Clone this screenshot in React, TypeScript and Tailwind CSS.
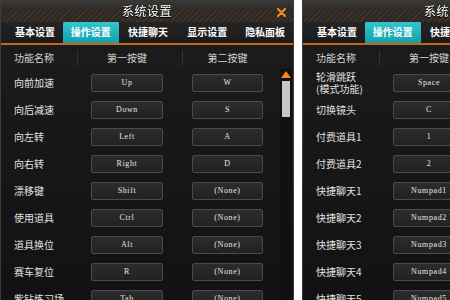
import React from 'react'

type Row = { name: string; sub?: string; k1: string; k2: string }

const leftRows: Row[] = [
  { name: '向前加速', k1: 'Up', k2: 'W' },
  { name: '向后减速', k1: 'Down', k2: 'S' },
  { name: '向左转', k1: 'Left', k2: 'A' },
  { name: '向右转', k1: 'Right', k2: 'D' },
  { name: '漂移键', k1: 'Shift', k2: '(None)' },
  { name: '使用道具', k1: 'Ctrl', k2: '(None)' },
  { name: '道具换位', k1: 'Alt', k2: '(None)' },
  { name: '赛车复位', k1: 'R', k2: '(None)' },
  { name: '紫钻练习场', k1: 'Tab', k2: '(None)' },
]

const rightRows: Row[] = [
  { name: '轮滑跳跃', sub: '(模式功能)', k1: 'Space', k2: '(None)' },
  { name: '切换镜头', k1: 'C', k2: '(None)' },
  { name: '付费道具1', k1: '1', k2: '(None)' },
  { name: '付费道具2', k1: '2', k2: '(None)' },
  { name: '快捷聊天1', k1: 'Numpad1', k2: '(None)' },
  { name: '快捷聊天2', k1: 'Numpad2', k2: '(None)' },
  { name: '快捷聊天3', k1: 'Numpad3', k2: '(None)' },
  { name: '快捷聊天4', k1: 'Numpad4', k2: '(None)' },
  { name: '快捷聊天5', k1: 'Numpad5', k2: '(None)' },
]

const tabs = [
  { label: '基本设置', w: 'w-[56px]' },
  { label: '操作设置', w: 'w-[56px]' },
  { label: '快捷聊天', w: 'w-[59px]' },
  { label: '显示设置', w: 'w-[60px]' },
  { label: '隐私面板', w: 'w-[56px]' },
]

const cjk = "font-['Noto_Sans_CJK_SC','Noto_Sans',sans-serif]"

function KeyBox({ text, w }: { text: string; w: string }) {
  return (
    <div
      className={`${w} h-[18px] flex items-center justify-center rounded-[2px] border border-[#4a4a4a] bg-gradient-to-b from-[#2c2c2c] to-[#222222] text-[#e6e6e6] text-[8px] tracking-[0.6px] font-['Liberation_Serif',serif]`}
    >
      {text}
    </div>
  )
}

function Panel({ rows }: { rows: Row[] }) {
  return (
    <div className={`w-[294px] h-[300px] shrink-0 flex flex-col bg-[#161616] border-x border-[#3c3c3c] ${cjk}`}>
      {/* Title bar */}
      <div className="relative h-[22px] shrink-0 bg-[repeating-linear-gradient(135deg,#2c2a28_0px,#2c2a28_3px,#4a3620_3px,#4a3620_4px)] flex items-center justify-center">
        <div className="absolute inset-x-0 top-0 h-[10px] bg-gradient-to-b from-[#3a3a3a] to-[#2d2b29]" />
        <span className="relative text-white text-[12px] leading-none tracking-[0.5px] drop-shadow-[0_1px_0_#000]">系统设置</span>
        <svg className="absolute right-[7px] top-[8px]" width="9" height="9" viewBox="0 0 9 9">
          <path d="M1 1 L8 8 M8 1 L1 8" stroke="#f08a1c" strokeWidth="2.2" strokeLinecap="round" />
        </svg>
      </div>

      {/* Tabs */}
      <div className="h-[23px] shrink-0 flex items-end pl-[6px] gap-0 bg-gradient-to-b from-[#242424] to-[#1b1b1b] border-b-2 border-[#c4661c]">
        {tabs.map((t, i) => (
          <div
            key={t.label}
            className={`${t.w} h-[22px] flex items-center justify-center text-[10px] font-bold leading-none text-white ${
              i === 1 ? 'rounded-t-[3px] bg-gradient-to-b from-[#37c6cf] to-[#12a0ab]' : ''
            }`}
          >
            {t.label}
          </div>
        ))}
      </div>

      {/* Header */}
      <div className="h-[24px] shrink-0 flex items-center text-[10px] text-[#d4d4d4] bg-[#1b1b1b]">
        <div className="w-[77px] pl-[13px] border-r border-[#333]">功能名称</div>
        <div className="w-[105px] text-center pr-[6px] border-r border-[#333]">第一按键</div>
        <div className="w-[97px] text-center pr-[8px]">第二按键</div>
      </div>

      {/* Body */}
      <div className="flex-1 flex min-h-0 bg-gradient-to-b from-[#1a1a1a] to-[#121212]">
        <div className="w-[279px] flex flex-col">
          {rows.map(r => (
            <div key={r.name} className="h-[27px] shrink-0 flex items-center">
              <div className="w-[77px] pl-[13px] text-[10px] text-[#e2e2e2] leading-[12px]">
                <div>{r.name}</div>
                {r.sub && <div>{r.sub}</div>}
              </div>
              <div className="w-[105px] pl-[13px]">
                <KeyBox text={r.k1} w="w-[72px]" />
              </div>
              <div className="w-[97px] pl-[9px]">
                <KeyBox text={r.k2} w="w-[71px]" />
              </div>
            </div>
          ))}
        </div>
        {/* Scrollbar */}
        <div className="w-[12px] flex flex-col items-center bg-[#101010] pt-[2px]">
          <svg width="10" height="7" viewBox="0 0 10 7">
            <path d="M5 0 L10 7 L0 7 Z" fill="#f08a1c" />
          </svg>
          <div className="mt-[3px] w-[8px] h-[36px] bg-[#c6c6c6]" />
        </div>
      </div>
    </div>
  )
}

export default function App() {
  return (
    <div className="w-[450px] h-[300px] bg-white flex overflow-hidden">
      <Panel rows={leftRows} />
      <div className="w-[8px] shrink-0" />
      <Panel rows={rightRows} />
    </div>
  )
}
